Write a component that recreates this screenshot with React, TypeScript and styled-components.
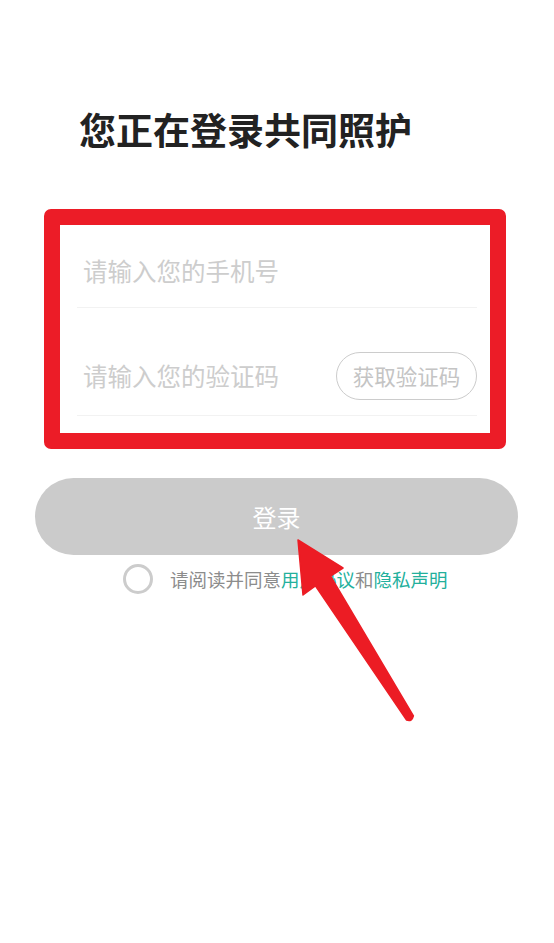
import React, {useState} from "react";
import styled, {createGlobalStyle} from "styled-components";

const GlobalStyle = createGlobalStyle`
  body {
    margin: 0;
    background: #ffffff;
    font-family: "Noto Sans CJK SC", "Noto Sans", sans-serif;
  }
`

export default function App() {
    const [agreed, setAgreed] = useState<boolean>(false);

    return <>
        <GlobalStyle/>
        <StyledPage>
            <StyledTitle>您正在登录共同照护</StyledTitle>
            <StyledForm>
                <StyledRow $height={83} $top={8}>
                    <StyledInput placeholder="请输入您的手机号"/>
                </StyledRow>
                <StyledRow $height={108} $top={28}>
                    <StyledInput placeholder="请输入您的验证码"/>
                    <StyledCodeButton>获取验证码</StyledCodeButton>
                </StyledRow>
            </StyledForm>
            <StyledLoginButton>登录</StyledLoginButton>
            <StyledAgreement>
                <StyledCheck $checked={agreed} onClick={() => setAgreed(!agreed)}/>
                <StyledAgreementText>
                    请阅读并同意<StyledLink>用户协议</StyledLink>和<StyledLink>隐私声明</StyledLink>
                </StyledAgreementText>
            </StyledAgreement>
            <StyledArrow viewBox="0 0 130 200" width="130" height="200">
                <path
                    d="M8 10 L53 38 L40.6 46.2 L123.4 185.9 Q122 192 116.6 190.1 L25.4 55.8 L13 65 Z"
                    fill="#ec1c24"
                    stroke="#ec1c24"
                    strokeWidth="1.5"
                    strokeLinejoin="round"
                />
            </StyledArrow>
        </StyledPage>
    </>
}

const StyledPage = styled.div`
  position: relative;
  width: 554px;
  min-height: 943px;
  padding-top: 108px;
  box-sizing: border-box;
  display: flex;
  flex-direction: column;
`

const StyledTitle = styled.h1`
  margin: 0 0 58px 79px;
  font-size: 37px;
  line-height: 43px;
  font-weight: 700;
  color: #222222;
  letter-spacing: 0;
`

const StyledForm = styled.div`
  margin-left: 44px;
  width: 462px;
  box-sizing: border-box;
  border: 16px solid #ec1c27;
  border-radius: 7px;
  padding: 0 13px 17px 17px;
  background: #ffffff;
`

const StyledRow = styled.div<{ $height: number, $top: number }>`
  height: ${p => p.$height}px;
  padding: ${p => p.$top}px 0 0 6px;
  box-sizing: border-box;
  display: flex;
  align-items: center;
  border-bottom: 1px solid #f2f2f2;
`

const StyledInput = styled.input`
  flex: 1;
  min-width: 0;
  border: none;
  outline: none;
  padding: 0;
  font-family: inherit;
  font-size: 24.5px;
  color: #333333;
  background: transparent;

  &::placeholder {
    color: #cdcdcd;
  }
`

const StyledCodeButton = styled.button`
  width: 141px;
  height: 48px;
  border: 1.5px solid #cccccc;
  border-radius: 24px;
  background: #ffffff;
  color: #c4c4c4;
  font-family: inherit;
  font-size: 21.5px;
  padding: 0;
`

const StyledLoginButton = styled.button`
  margin: 29px 0 0 35px;
  width: 483px;
  height: 77px;
  border: none;
  border-radius: 39px;
  background: #cbcbcb;
  color: #ffffff;
  font-family: inherit;
  font-size: 24px;
  padding: 0;
`

const StyledAgreement = styled.div`
  margin: 9px 0 0 123px;
  display: flex;
  align-items: center;
  gap: 17px;
`

const StyledCheck = styled.span<{ $checked: boolean }>`
  width: 30px;
  height: 30px;
  box-sizing: border-box;
  border-radius: 50%;
  border: 3px solid ${p => p.$checked ? "#26b3a0" : "#cccccc"};
  background: ${p => p.$checked ? "#26b3a0" : "transparent"};
`

const StyledAgreementText = styled.span`
  font-size: 18.5px;
  color: #8c8c8c;
`

const StyledLink = styled.span`
  color: #23b09c;
`

const StyledArrow = styled.svg`
  position: absolute;
  left: 290px;
  top: 530px;
  pointer-events: none;
`
